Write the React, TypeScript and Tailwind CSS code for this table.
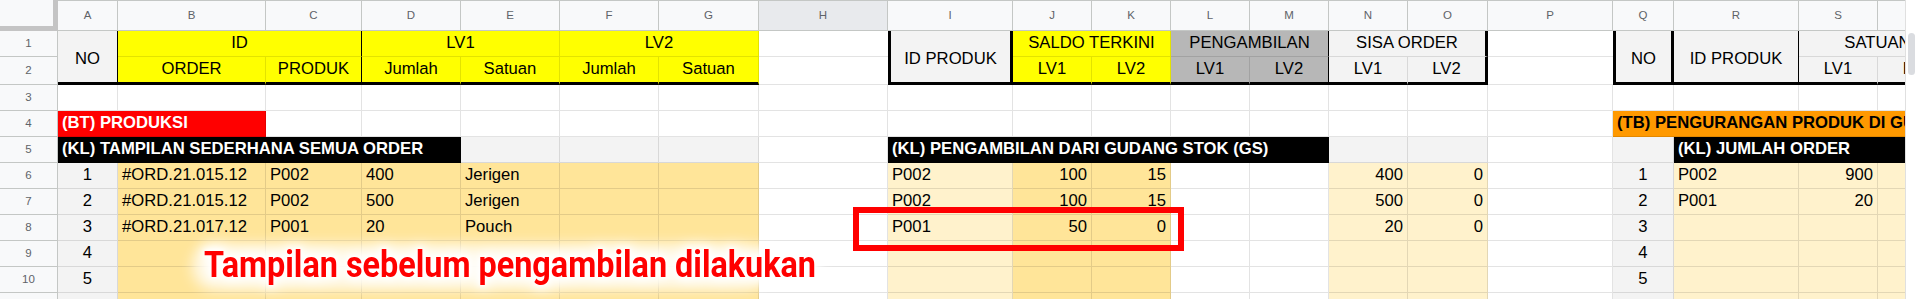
import React from "react";
import { twMerge } from "tailwind-merge";

const FONT = "font-['Liberation_Sans',Arial,sans-serif]";
const BASE =
  "min-w-0 overflow-hidden whitespace-nowrap flex items-end pb-[1px] px-[4px] leading-[19px] text-[16.67px] text-black border-r border-b border-black/[0.11] bg-white";

function C({ c = "", children }: { c?: string; children?: React.ReactNode }) {
  return <div className={twMerge(BASE, c)}>{children}</div>;
}

function RH({ children }: { children?: React.ReactNode }) {
  return (
    <div className="flex items-center justify-center bg-[#f8f9fa] border-r border-b border-[#c4c7c5] text-[11.5px] text-[#5f6368]">
      {children}
    </div>
  );
}

const LETTERS = ["A", "B", "C", "D", "E", "F", "G", "H", "I", "J", "K", "L", "M", "N", "O", "P", "Q", "R", "S", "T"];

type Row = {
  n: string;
  b?: string;
  c?: string;
  d?: string;
  e?: string;
  i?: string;
  j?: string;
  k?: string;
  nn?: string;
  o?: string;
  q: string;
  r?: string;
  s?: string;
};

const DATA: Row[] = [
  { n: "1", b: "#ORD.21.015.12", c: "P002", d: "400", e: "Jerigen", i: "P002", j: "100", k: "15", nn: "400", o: "0", q: "1", r: "P002", s: "900" },
  { n: "2", b: "#ORD.21.015.12", c: "P002", d: "500", e: "Jerigen", i: "P002", j: "100", k: "15", nn: "500", o: "0", q: "2", r: "P001", s: "20" },
  { n: "3", b: "#ORD.21.017.12", c: "P001", d: "20", e: "Pouch", i: "P001", j: "50", k: "0", nn: "20", o: "0", q: "3" },
  { n: "4", q: "4" },
  { n: "5", q: "5" },
  { n: "", q: "" },
];

const ORANGE = "bg-[#ffe599]";
const LIGHT = "bg-[#fff2cc]";
const GRAY = "bg-[#f3f3f3]";
const YEL = "bg-[#ffff00] justify-center";
const THICKB = "border-b-[3px] border-b-black";

export default function App() {
  return (
    <div className={`w-[1916px] h-[299px] overflow-hidden bg-white flex ${FONT}`}>
      <div className="relative w-[1905px] h-[299px] overflow-hidden shrink-0">
        <div className="grid w-[1957px] grid-cols-[58px_60px_148px_96px_99px_99px_99px_100px_129px_125px_79px_79px_79px_79px_79px_80px_125px_61px_125px_79px_79px] grid-rows-[31px_26px_28px_26px_26px_26px_26px_26px_26px_26px_26px_26px]">
          {/* column header row */}
          <div className="bg-[#f8f9fa] border-r-[5px] border-b-[5px] border-[#c4c4c4]" />
          {LETTERS.map((l) => (
            <div
              key={l}
              className={
                l === "H"
                  ? "flex items-center justify-center bg-[#e8eaed] border-r border-b border-t border-[#c4c7c5] text-[11.5px] text-[#5f6368]"
                  : "flex items-center justify-center bg-[#f8f9fa] border-r border-b border-t border-[#c4c7c5] text-[11.5px] text-[#5f6368]"
              }
            >
              {l}
            </div>
          ))}

          {/* row 1 */}
          <RH>1</RH>
          <C c={`row-span-2 ${GRAY} items-center justify-center pt-[5px] border-r-black ${THICKB}`}>NO</C>
          <C c={`col-span-2 ${YEL} border-r-black`}>ID</C>
          <C c={`col-span-2 ${YEL}`}>LV1</C>
          <C c={`col-span-2 ${YEL}`}>LV2</C>
          <C c="border-r-0" />
          <C c={`row-span-2 ${GRAY} items-center justify-center pt-[5px] border-l-[3px] border-l-black border-r-[3px] border-r-black ${THICKB}`}>ID PRODUK</C>
          <C c={`col-span-2 ${YEL}`}>SALDO TERKINI</C>
          <C c="col-span-2 bg-[#b7b7b7] justify-center border-r-black">PENGAMBILAN</C>
          <C c={`col-span-2 ${GRAY} justify-center border-r-[3px] border-r-black`}>SISA ORDER</C>
          <C c="border-r-0" />
          <C c={`row-span-2 ${GRAY} items-center justify-center pt-[5px] border-l-[3px] border-l-black border-r-[3px] border-r-black ${THICKB}`}>NO</C>
          <C c={`row-span-2 ${GRAY} items-center justify-center pt-[5px] border-r-black ${THICKB}`}>ID PRODUK</C>
          <C c={`col-span-2 ${GRAY} justify-center`}>SATUAN</C>

          {/* row 2 */}
          <RH>2</RH>
          <C c={`${YEL} ${THICKB}`}>ORDER</C>
          <C c={`${YEL} border-r-black ${THICKB}`}>PRODUK</C>
          <C c={`${YEL} ${THICKB}`}>Jumlah</C>
          <C c={`${YEL} ${THICKB}`}>Satuan</C>
          <C c={`${YEL} ${THICKB}`}>Jumlah</C>
          <C c={`${YEL} ${THICKB}`}>Satuan</C>
          <C c="border-r-0" />
          <C c={`${YEL} ${THICKB}`}>LV1</C>
          <C c={`${YEL} ${THICKB}`}>LV2</C>
          <C c={`bg-[#b7b7b7] justify-center ${THICKB}`}>LV1</C>
          <C c={`bg-[#b7b7b7] justify-center border-r-black ${THICKB}`}>LV2</C>
          <C c={`${GRAY} justify-center ${THICKB}`}>LV1</C>
          <C c={`${GRAY} justify-center border-r-[3px] border-r-black ${THICKB}`}>LV2</C>
          <C c="border-r-0" />
          <C c={`${GRAY} justify-center ${THICKB}`}>LV1</C>
          <C c={`${GRAY} justify-center ${THICKB}`}>LV2</C>

          {/* row 3 */}
          <RH>3</RH>
          {LETTERS.map((l) => (
            <C key={"r3" + l} />
          ))}

          {/* row 4 */}
          <RH>4</RH>
          <C c="col-span-2 bg-[#ff0000] text-white font-bold">(BT) PRODUKSI</C>
          {["C", "D", "E", "F", "G", "H", "I", "J", "K", "L", "M", "N", "O", "P"].map((l) => (
            <C key={"r4" + l} />
          ))}
          <C c="col-span-4 bg-[#ff9900] font-bold">(TB) PENGURANGAN PRODUK DI GUDANG STOK (GS)</C>

          {/* row 5 */}
          <RH>5</RH>
          <C c="col-span-4 bg-black text-white font-bold">(KL) TAMPILAN SEDERHANA SEMUA ORDER</C>
          <C c={GRAY} />
          <C c={GRAY} />
          <C c={GRAY} />
          <C />
          <C c="col-span-5 bg-black text-white font-bold">(KL) PENGAMBILAN DARI GUDANG STOK (GS)</C>
          <C c={GRAY} />
          <C c={GRAY} />
          <C />
          <C c={GRAY} />
          <C c="col-span-3 bg-black text-white font-bold">(KL) JUMLAH ORDER</C>

          {/* data rows */}
          {DATA.map((r, idx) => (
            <React.Fragment key={"d" + idx}>
              <RH>{idx + 6}</RH>
              <C c={`${GRAY} justify-center`}>{r.n}</C>
              <C c={ORANGE}>{r.b}</C>
              <C c={ORANGE}>{r.c}</C>
              <C c={ORANGE}>{r.d}</C>
              <C c={ORANGE}>{r.e}</C>
              <C c={ORANGE} />
              <C c={ORANGE} />
              <C />
              <C c={LIGHT}>{r.i}</C>
              <C c={`${ORANGE} justify-end`}>{r.j}</C>
              <C c={`${ORANGE} justify-end`}>{r.k}</C>
              <C />
              <C />
              <C c={`${LIGHT} justify-end`}>{r.nn}</C>
              <C c={`${LIGHT} justify-end`}>{r.o}</C>
              <C />
              <C c={`${GRAY} justify-center`}>{r.q}</C>
              <C c={LIGHT}>{r.r}</C>
              <C c={`${LIGHT} justify-end`}>{r.s}</C>
              <C c={LIGHT} />
            </React.Fragment>
          ))}
        </div>

        {/* red highlight box */}
        <div className="absolute left-[853px] top-[207px] w-[331px] h-[44px] border-[6px] border-[#ff0000]" />

        {/* soft white glow behind the caption */}
        <div className="absolute left-[192px] top-[244px] w-[576px] h-[46px] rounded-[22px] bg-white/70 blur-[7px]" />

        {/* overlay caption */}
        <div className="absolute left-[204px] top-[246px] origin-left scale-x-[0.875] whitespace-nowrap font-['Roboto',sans-serif] font-bold text-[37px] leading-[37px] text-[#ff0000] [text-shadow:0_0_2px_#fff,0_0_4px_#fff,0_0_7px_#fff,0_0_10px_#fff,0_0_13px_#fff,0_0_16px_#fff,0_0_20px_#fff,0_0_24px_#fff]">
          Tampilan sebelum pengambilan dilakukan
        </div>
      </div>

      {/* scrollbar */}
      <div className="w-[11px] h-[299px] shrink-0 bg-white border-l border-[#e0e0e0] pt-[33px] flex justify-center">
        <div className="w-[7px] h-[42px] rounded-full bg-[#dadce0]" />
      </div>
    </div>
  );
}
